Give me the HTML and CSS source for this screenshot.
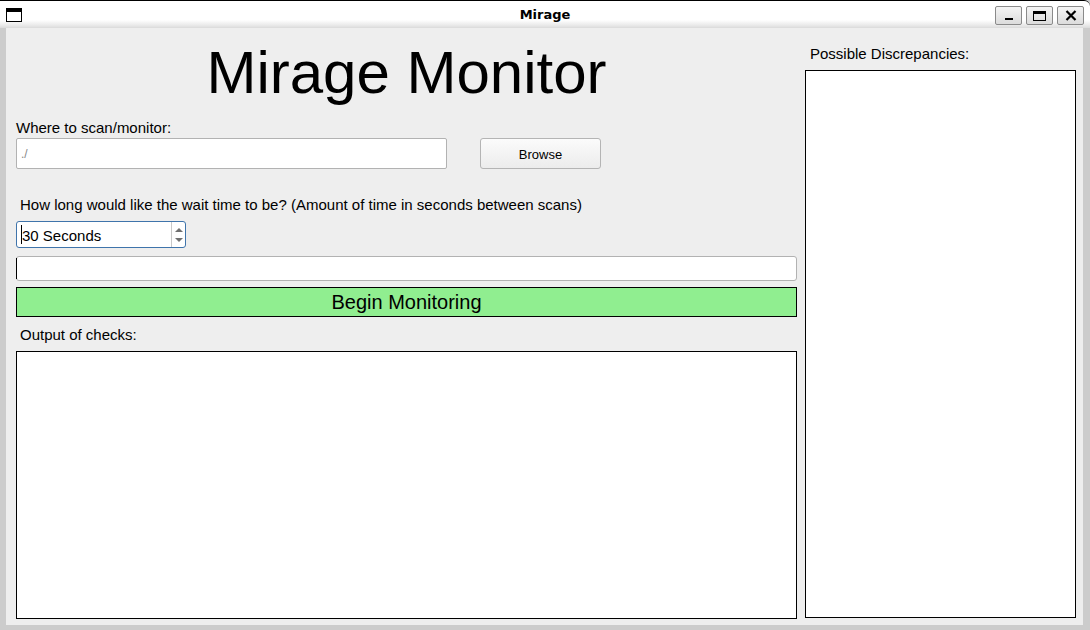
FILE: index.html
```html
<!DOCTYPE html>
<html>
<head>
<meta charset="utf-8">
<title>Mirage</title>
<link rel="stylesheet" href="styles.css">
</head>
<body>
<div class="window">
  <div class="titlebar">
    <div class="app-icon"></div>
    <div class="title">Mirage</div>
    <div class="wm-buttons">
      <div class="wm-btn"><span class="ico-min"></span></div>
      <div class="wm-btn"><span class="ico-max"></span></div>
      <div class="wm-btn">
        <svg width="12" height="11" viewBox="0 0 12 11"><path d="M1.5 1 L10.5 10 M10.5 1 L1.5 10" stroke="#000" stroke-width="2.2" fill="none"/></svg>
      </div>
    </div>
  </div>
  <div class="client">
    <div class="left">
      <h1 class="heading">Mirage Monitor</h1>
      <div class="label">Where to scan/monitor:</div>
      <div class="path-row">
        <div class="entry path-entry"><span class="path-text">./</span></div>
        <div class="browse">Browse</div>
      </div>
      <div class="label indent wait-label">How long would like the wait time to be? (Amount of time in seconds between scans)</div>
      <div class="spinbox">
        <div class="spin-value"><span class="caret"></span>30 Seconds</div>
        <div class="spin-arrows">
          <svg width="8" height="6" viewBox="0 0 8 6"><path d="M0 5 L4 1 L8 5 Z" fill="#707070"/></svg>
          <svg width="8" height="6" viewBox="0 0 8 6"><path d="M0 1 L4 5 L8 1 Z" fill="#707070"/></svg>
        </div>
      </div>
      <div class="entry wide-entry"><span class="edge-caret"></span></div>
      <div class="begin">Begin Monitoring</div>
      <div class="label indent output-label">Output of checks:</div>
      <div class="textbox output-box"></div>
    </div>
    <div class="right">
      <div class="label right-label">Possible Discrepancies:</div>
      <div class="textbox disc-box"></div>
    </div>
  </div>
</div>
</body>
</html>
```

FILE: styles.css
```css
* { box-sizing: border-box; }
html, body {
  margin: 0;
  padding: 0;
  width: 1090px;
  height: 630px;
  overflow: hidden;
  background: #cccccc;
  font-family: "Liberation Sans", Arial, sans-serif;
}
.window {
  width: 1090px;
  height: 630px;
  background: #cccccc;
  display: flex;
  flex-direction: column;
}
.titlebar {
  height: 28px;
  flex: 0 0 28px;
  border-top: 1px solid #000;
  border-top-right-radius: 6px;
  background: linear-gradient(to bottom, #ffffff 0px, #ffffff 19px, #e6e6e6 25px, #dadada 27px);
  position: relative;
  display: flex;
  align-items: center;
}
.app-icon {
  position: absolute;
  left: 6px;
  top: 7px;
  width: 16px;
  height: 14px;
  border: 1.5px solid #000;
  border-top-width: 4px;
  background: #fff;
}
.title {
  flex: 1;
  text-align: center;
  font-family: "DejaVu Sans", sans-serif;
  font-weight: bold;
  font-size: 13px;
  color: #000;
  margin-top: -1px;
}
.wm-buttons {
  position: absolute;
  right: 6px;
  top: 5px;
  display: flex;
  gap: 4px;
}
.wm-btn {
  width: 27px;
  height: 19px;
  border: 1px solid #8a8a8a;
  border-radius: 2px;
  background: linear-gradient(to bottom, #f4f4f4, #dcdcdc);
  display: flex;
  align-items: center;
  justify-content: center;
}
.ico-min {
  width: 8px;
  height: 2px;
  background: #000;
  margin-top: 7px;
}
.ico-max {
  width: 13px;
  height: 10px;
  border: 1.5px solid #000;
  border-top-width: 3px;
}
.client {
  flex: 1;
  margin: 0 7px 5px 6px;
  background: #eeeeee;
  display: flex;
  padding-left: 10px;
  gap: 8px;
}
.left {
  width: 781px;
  display: flex;
  flex-direction: column;
}
.right {
  width: 271px;
  display: flex;
  flex-direction: column;
}
.heading {
  margin: 15px 0 0 0;
  font-weight: normal;
  font-size: 60px;
  line-height: 60px;
  height: 60px;
  text-align: center;
  color: #000;
}
.label {
  font-size: 15px;
  line-height: 18px;
  height: 18px;
  color: #000;
  margin-top: 16px;
  white-space: nowrap;
}
.indent { padding-left: 4px; }
.path-row {
  margin-top: 1px;
  display: flex;
  height: 31px;
}
.entry {
  background: #fff;
  border: 1px solid #b2b2b2;
  border-radius: 2px;
}
.path-entry {
  width: 431px;
  height: 31px;
  display: flex;
  align-items: center;
  padding-left: 4px;
}
.path-text {
  font-size: 12px;
  color: #888;
}
.browse {
  margin-left: 33px;
  width: 121px;
  height: 31px;
  border: 1px solid #b4b4b4;
  border-radius: 3px;
  background: linear-gradient(to bottom, #fbfbfb, #ececec);
  font-size: 13px;
  display: flex;
  align-items: center;
  justify-content: center;
  padding-top: 2px;
  color: #000;
}
.wait-label { margin-top: 27px; }
.spinbox {
  margin-top: 7px;
  width: 170px;
  height: 27px;
  border: 1px solid #3f74ab;
  border-radius: 3px;
  background: #fff;
  display: flex;
}
.spin-value {
  flex: 1;
  font-size: 15px;
  display: flex;
  align-items: center;
  padding-left: 4px;
  padding-top: 2px;
  color: #000;
}
.caret {
  display: inline-block;
  width: 1px;
  height: 19px;
  background: #000;
  margin-top: -2px;
}
.spin-arrows {
  width: 14px;
  border-left: 1px solid #c8c8c8;
  display: flex;
  flex-direction: column;
  align-items: center;
  justify-content: center;
  gap: 4px;
}
.wide-entry {
  margin-top: 8px;
  height: 25px;
  display: flex;
  align-items: center;
  border-radius: 3px;
}
.edge-caret {
  width: 1px;
  height: 21px;
  background: #000;
  margin-left: -1px;
}
.begin {
  margin-top: 6px;
  height: 30px;
  background: #90ee90;
  border: 1px solid #000;
  font-size: 20px;
  display: flex;
  align-items: center;
  justify-content: center;
  padding-top: 1px;
  color: #000;
}
.output-label { margin-top: 9px; }
.textbox {
  background: #fff;
  border: 1px solid #000;
}
.output-box {
  margin-top: 7px;
  height: 268px;
}
.right-label {
  margin-top: 17px;
  padding-left: 5px;
}
.disc-box {
  margin-top: 7px;
  height: 548px;
}
```
